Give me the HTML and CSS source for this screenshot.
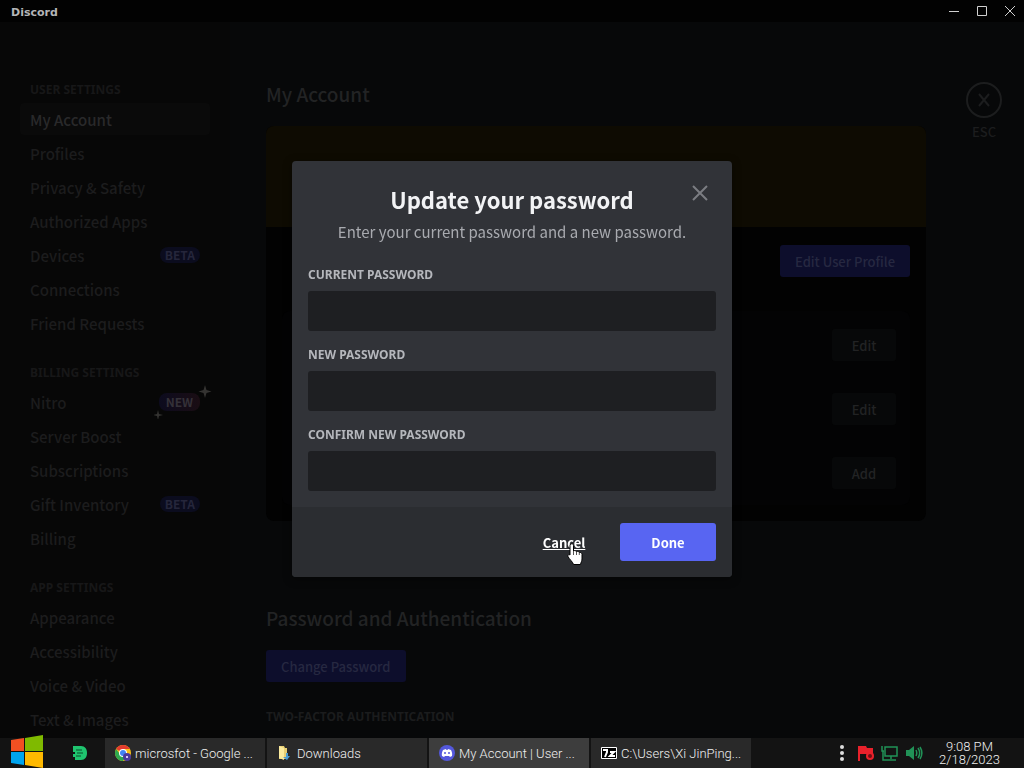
FILE: index.html
```html
<!DOCTYPE html>
<html lang="en">
<head>
    <meta charset="UTF-8">
    <meta name="viewport" content="width=device-width, initial-scale=1.0">
    <title>Discord</title>
    <link rel="stylesheet" href="styles.css">
</head>
<body>
    <!-- Title Bar -->
    <header class="titlebar">
        <span class="wordmark">Discord</span>
        <div class="window-buttons">
            <button type="button" aria-label="Minimize"><svg width="12" height="12" viewBox="0 0 12 12"><path d="M1 6.500h10"/></svg></button>
            <button type="button" aria-label="Maximize"><svg width="12" height="12" viewBox="0 0 12 12"><path d="M1.500 1.500h9v9h-9z"/></svg></button>
            <button type="button" aria-label="Close window"><svg width="12" height="12" viewBox="0 0 12 12"><path d="M1 1l10 10M11 1L1 11"/></svg></button>
        </div>
    </header>

    <!-- Settings -->
    <div class="settings">
        <nav class="sidebar">
            <section class="nav-group">
                <h2>User Settings</h2>
                <a class="nav-item selected" href="#">My Account</a>
                <a class="nav-item" href="#">Profiles</a>
                <a class="nav-item" href="#">Privacy &amp; Safety</a>
                <a class="nav-item" href="#">Authorized Apps</a>
                <a class="nav-item" href="#">Devices <span class="badge">BETA</span></a>
                <a class="nav-item" href="#">Connections</a>
                <a class="nav-item" href="#">Friend Requests</a>
            </section>
            <section class="nav-group">
                <h2>Billing Settings</h2>
                <a class="nav-item" href="#">Nitro
                    <span class="badge badge-new">NEW
                        <svg class="sparkles" width="58" height="34" viewBox="0 0 58 34"><path d="M51 0l1.500 5 5 1.500-5 1.500-1.500 5-1.500-5-5-1.500 5-1.500zM4 25l1 4 4 1-4 1-1 4-1-4-4-1 4-1z"/></svg>
                    </span>
                </a>
                <a class="nav-item" href="#">Server Boost</a>
                <a class="nav-item" href="#">Subscriptions</a>
                <a class="nav-item" href="#">Gift Inventory <span class="badge">BETA</span></a>
                <a class="nav-item" href="#">Billing</a>
            </section>
            <section class="nav-group">
                <h2>App Settings</h2>
                <a class="nav-item" href="#">Appearance</a>
                <a class="nav-item" href="#">Accessibility</a>
                <a class="nav-item" href="#">Voice &amp; Video</a>
                <a class="nav-item" href="#">Text &amp; Images</a>
            </section>
        </nav>

        <main class="content">
            <h1>My Account</h1>
            <div class="profile-card">
                <div class="banner"></div>
                <div class="profile-header">
                    <button type="button" class="btn-dim">Edit User Profile</button>
                </div>
                <div class="fields">
                    <button type="button">Edit</button>
                    <button type="button">Edit</button>
                    <button type="button">Add</button>
                </div>
            </div>
            <h1>Password and Authentication</h1>
            <button type="button" class="btn-dim">Change Password</button>
            <h2>Two-Factor Authentication</h2>
        </main>

        <aside class="escape">
            <button type="button" aria-label="Close settings">
                <svg width="36" height="36" viewBox="0 0 36 36"><circle cx="18" cy="18" r="17"/><path d="M13 12l10 12M23 12L13 24"/></svg>
                <span>ESC</span>
            </button>
        </aside>
    </div>

    <!-- Update Password Dialog -->
    <div class="overlay">
        <form class="modal" role="dialog" aria-labelledby="modalTitle">
            <button type="button" class="modal-close" aria-label="Close"><svg width="18" height="18" viewBox="0 0 18 18"><path d="M2 2l14 14M16 2L2 16"/></svg></button>
            <div class="modal-body">
                <h2 id="modalTitle">Update your password</h2>
                <p>Enter your current password and a new password.</p>
                <label for="currentPassword">Current Password</label>
                <input type="password" id="currentPassword">
                <label for="newPassword">New Password</label>
                <input type="password" id="newPassword">
                <label for="confirmPassword">Confirm New Password</label>
                <input type="password" id="confirmPassword">
            </div>
            <div class="modal-footer">
                <button type="button" class="cancel">Cancel</button>
                <button type="button" class="done">Done</button>
            </div>
        </form>
    </div>

    <!-- Taskbar -->
    <footer class="taskbar">
        <button type="button" class="start" aria-label="Start">
            <svg width="34" height="34" viewBox="0 0 34 34">
                <path fill="#f25022" d="M1 6l13-2v13H1z"/>
                <path fill="#7fba00" d="M15 4l18-3v16H15z"/>
                <path fill="#00a4ef" d="M1 18h13v13L1 29z"/>
                <path fill="#ffb900" d="M15 18h18v16l-18-3z"/>
            </svg>
        </button>
        <button type="button" class="pinned" aria-label="Pinned app">
            <svg width="16" height="14" viewBox="0 0 16 14"><path fill="#1fc46f" d="M1 0h8c4 0 6 3 6 7s-2 7-6 7H3v-3H1V8h2V6H1z"/><path stroke="#0b4f2d" d="M4 4h6M5 7h6M4 10h5"/></svg>
        </button>
        <div class="tasks">
            <button type="button" class="task">
                <svg width="16" height="16" viewBox="0 0 16 16"><circle cx="8" cy="8" r="8" fill="#fbc116"/><path fill="#e33b2e" d="M8 8L1.100 4A8 8 0 0 1 14.900 4H8z"/><path fill="#2da94f" d="M1.100 4A8 8 0 0 0 8 16l3-6-6-1z"/><circle cx="8" cy="8" r="4" fill="#fff"/><circle cx="8" cy="8" r="3" fill="#4285f4"/><circle cx="12" cy="12" r="4" fill="#4b3a9c"/><path fill="#d7c7f4" d="M11 11h2v2h-2z"/></svg>
                <span>microsfot - Google ...</span>
            </button>
            <button type="button" class="task">
                <svg width="16" height="16" viewBox="0 0 16 16"><path fill="#e8cf72" d="M2 1h5l1 2h2v11H2z"/><path fill="#fbeb9e" d="M2 1l5 2v12l-5-2z"/><path fill="#4a9bd4" d="M9 8h2v3h2l-3 4-4-3h3z"/></svg>
                <span>Downloads</span>
            </button>
            <button type="button" class="task active">
                <svg width="16" height="16" viewBox="0 0 16 16"><circle cx="8" cy="8" r="8" fill="#5458dc"/><path fill="#fff" d="M4 5l3-1 .5 1h1L9 4l3 1c1 2 1.500 4 1 6l-2 1-1-1H6l-1 1-2-1c-.5-2 0-4 1-6z"/><circle cx="6" cy="8" r="1" fill="#5458dc"/><circle cx="10" cy="8" r="1" fill="#5458dc"/></svg>
                <span>My Account | User ...</span>
            </button>
            <button type="button" class="task">
                <svg width="16" height="16" viewBox="0 0 16 16"><path fill="#000" stroke="#fff" d="M.5 2.500h15v11H.5z"/><path fill="none" stroke="#fff" stroke-width="2" d="M2 5h4v2L4 12M9 7h4l-4 4h5"/></svg>
                <span>C:\Users\Xi JinPing...</span>
            </button>
        </div>
        <div class="tray">
            <svg class="tray-more" width="6" height="18" viewBox="0 0 6 18"><g fill="#ddd"><circle cx="3" cy="3" r="2"/><circle cx="3" cy="9" r="2"/><circle cx="3" cy="15" r="2"/></g></svg>
            <svg width="18" height="18" viewBox="0 0 18 18"><path fill="#e8212b" d="M1 2h2v15H1zM3 2h6l1 2h6v8h-5l-1-2H3z"/><circle cx="13" cy="12" r="4" fill="#e8212b"/><circle cx="13" cy="12" r="2" fill="#6d1015"/></svg>
            <svg width="18" height="18" viewBox="0 0 18 18"><path fill="none" stroke="#219257" stroke-width="1.500" d="M4 3h12v9H4zM10 12v3M5 16h10M1 2v5h2M2 7v9h3"/></svg>
            <svg width="18" height="18" viewBox="0 0 18 18"><path fill="#219257" d="M1 6h3l5-4v14l-5-4H1z"/><path fill="none" stroke="#219257" stroke-width="1.500" d="M11 6c1 2 1 4 0 6M13 4c2 3 2 7 0 10M15 3c2.500 4 2.500 8 0 12"/></svg>
        </div>
        <div class="clock">
            <span>9:08 PM</span>
            <span>2/18/2023</span>
        </div>
    </footer>

    <svg class="pointer" width="18" height="23" viewBox="0 0 18 23"><path fill="#fff" stroke="#000" d="M4 1c1-.7 2.500 0 2.500 1.500V8c1-.8 2.500-.5 3 .7 1-.7 2.300-.3 2.800.8 1-.5 2.700.2 2.700 1.800V16c0 2-1 3-1.500 5.500h-7C6 19 2 16 1 13.500c-.7-1.500 1-2.500 2-1.500V2.500C3 2 3.300 1.300 4 1z"/><path stroke="#555" fill="none" d="M6.500 8v4M9.500 9v3M12.300 10v2"/></svg>
</body>
</html>
```
FILE: styles.css
```css
* {
    box-sizing: border-box;
}
body {
    margin: 0;
    height: 100vh;
    display: flex;
    flex-direction: column;
    overflow: hidden;
    background-color: #070809;
    color: #1d1e20;
    font-family: "Noto Sans CJK SC", "Noto Sans", sans-serif;
    font-size: 15px;
}
h1, h2, p {
    margin: 0;
}
button {
    padding: 0;
    border: none;
    background: none;
    color: inherit;
    font: inherit;
    cursor: pointer;
}
svg {
    display: block;
    flex: none;
}

/* Title bar */
.titlebar {
    flex: none;
    height: 22px;
    padding: 0 8px 0 11px;
    display: flex;
    align-items: center;
    justify-content: space-between;
    background-color: #020202;
    color: #b4b5b8;
}
.wordmark {
    padding-top: 2px;
    font: bold 11px "DejaVu Sans", sans-serif;
}
.window-buttons {
    display: flex;
    gap: 16px;
}
.window-buttons svg {
    fill: none;
    stroke: #d0d0d0;
}

/* Settings */
.settings {
    flex: 1;
    min-height: 0;
    display: flex;
    overflow: hidden;
}
.sidebar {
    flex: none;
    width: 230px;
    padding: 60px 20px 0;
    background-color: #070707;
}
.nav-group {
    margin-bottom: 26px;
}
.nav-group h2, .content h2 {
    font-family: "Noto Sans", sans-serif;
    font-size: 12px;
    line-height: 16px;
    text-transform: uppercase;
}
.nav-group h2 {
    margin: 0 10px 5px;
    color: #171718;
}
.nav-item {
    display: flex;
    align-items: center;
    justify-content: space-between;
    height: 32px;
    margin-bottom: 2px;
    padding: 0 10px;
    border-radius: 4px;
    color: #1c1c1d;
    font-weight: 500;
    text-decoration: none;
}
.selected {
    background-color: #0a0a0a;
    color: #29292a;
}
.badge {
    position: relative;
    padding: 0 5px;
    border-radius: 8px;
    background-color: #0b0c1e;
    color: #25263b;
    font-size: 12px;
    font-weight: bold;
    line-height: 16px;
}
.badge-new {
    padding: 0 7px;
    background: linear-gradient(90deg, #0c0b1e, #1a0d13);
    color: #343138;
    line-height: 18px;
}
.sparkles {
    position: absolute;
    top: -8px;
    left: -5px;
    fill: #343331;
}
.content {
    flex: 1;
    max-width: 736px;
    padding: 60px 40px 0 36px;
}
.content h1 {
    font-size: 19px;
    font-weight: 500;
    line-height: 24px;
    color: #222324;
}
.content h2 {
    margin-top: 27px;
    color: #1b1c1d;
}
.profile-card {
    margin: 20px 0 85px;
    padding-bottom: 16px;
    border-radius: 8px;
    background-color: #020202;
    overflow: hidden;
}
.banner {
    height: 101px;
    background-color: #0e0b02;
}
.profile-header {
    display: flex;
    justify-content: flex-end;
    padding: 18px 16px 34px;
}
.btn-dim {
    height: 32px;
    padding: 0 15px;
    border-radius: 3px;
    background-color: #0d0e2c;
    color: #262841;
    font-size: 13px;
    font-weight: 500;
}
.content h1 + .btn-dim {
    margin-top: 20px;
}
.fields {
    display: flex;
    flex-direction: column;
    align-items: flex-end;
    gap: 32px;
    margin: 0 16px;
    padding: 18px 14px 16px;
    border-radius: 8px;
    background-color: #030304;
}
.fields button {
    width: 64px;
    height: 32px;
    border-radius: 3px;
    background-color: #070809;
    color: #222324;
    font-size: 13px;
    font-weight: 500;
}
.escape {
    padding: 60px 0 0;
}
.escape button {
    display: flex;
    flex-direction: column;
    align-items: center;
    gap: 6px;
    color: #1c1d1e;
    font-size: 13px;
    font-weight: 500;
    line-height: 16px;
}
.escape svg {
    fill: none;
    stroke: #1c1d1e;
    stroke-width: 2;
}

/* Dialog */
.overlay {
    position: fixed;
    top: 0;
    right: 0;
    bottom: 30px;
    left: 0;
    display: flex;
    align-items: center;
    justify-content: center;
}
.modal {
    position: relative;
    width: 440px;
    border-radius: 4px;
    background-color: #313338;
    box-shadow: 0 2px 10px rgba(0, 0, 0, 0.4);
    overflow: hidden;
}
.modal-close {
    position: absolute;
    top: 23px;
    right: 23px;
}
.modal-close svg {
    fill: none;
    stroke: #7b7d82;
    stroke-width: 2;
}
.modal-body {
    padding: 23px 16px 0;
}
.modal-body h2 {
    color: #f2f3f5;
    font-size: 22px;
    font-weight: 700;
    line-height: 30px;
    text-align: center;
}
.modal-body p {
    margin: 8px 0 25px;
    color: #a9abb0;
    line-height: 20px;
    text-align: center;
}
.modal-body label {
    display: block;
    margin-bottom: 8px;
    color: #b5b7bc;
    font-family: "Noto Sans", sans-serif;
    font-size: 12px;
    font-weight: bold;
    line-height: 16px;
    text-transform: uppercase;
}
.modal-body input {
    display: block;
    width: 100%;
    height: 40px;
    margin-bottom: 16px;
    padding: 10px;
    border: none;
    border-radius: 3px;
    background-color: #1e1f22;
    color: #dbdee1;
    font: inherit;
}
.modal-footer {
    display: flex;
    justify-content: flex-end;
    gap: 8px;
    padding: 16px;
    background-color: #2b2d31;
}
.modal-footer button {
    width: 96px;
    height: 38px;
    border-radius: 3px;
    color: #fff;
    font-size: 13px;
    font-weight: 700;
}
.modal-footer .cancel {
    text-decoration: underline;
}
.modal-footer .done {
    background-color: #5865f2;
}
.pointer {
    position: fixed;
    top: 543px;
    left: 567px;
    pointer-events: none;
}

/* Taskbar */
.taskbar {
    position: relative;
    flex: none;
    display: flex;
    align-items: center;
    height: 30px;
    background-color: #131313;
    color: #f0f0f0;
    font-family: Roboto, "Liberation Sans", sans-serif;
    font-size: 13px;
    font-weight: 300;
}
.start {
    width: 56px;
    padding-left: 10px;
    margin-top: -4px;
}
.pinned {
    width: 49px;
    padding-left: 16px;
}
.tasks {
    flex: 1;
    display: flex;
    gap: 2px;
    height: 30px;
}
.task {
    flex: 0 1 160px;
    display: flex;
    align-items: center;
    gap: 4px;
    padding: 0 10px;
    background-color: #292929;
    white-space: nowrap;
}
.task.active {
    background-color: #3d3d3d;
}
.tray {
    display: flex;
    align-items: center;
    gap: 6px;
}
.tray-more {
    margin-right: 6px;
}
.clock {
    width: 101px;
    padding-right: 8px;
    display: flex;
    flex-direction: column;
    line-height: 13px;
    text-align: center;
}
```
